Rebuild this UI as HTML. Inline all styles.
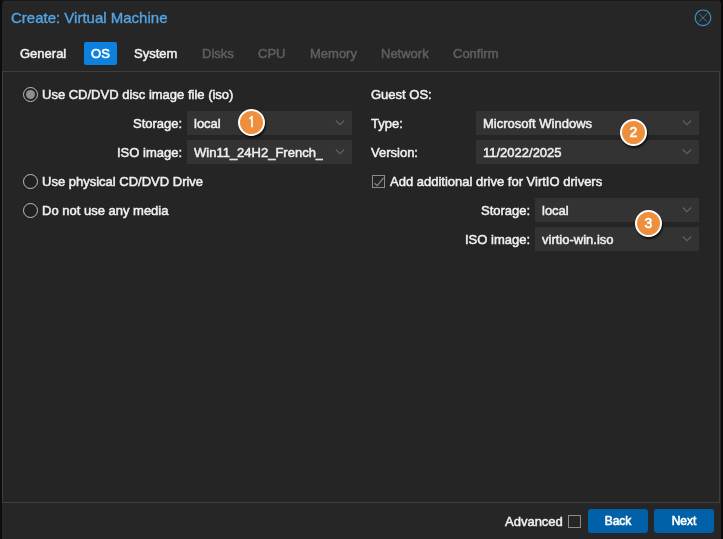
<!DOCTYPE html>
<html><head><meta charset="utf-8">
<style>
html,body{margin:0;padding:0;background:#0d0d0d;}
body{width:723px;height:539px;position:relative;overflow:hidden;font-family:"Liberation Sans",sans-serif;font-size:13px;color:#f0f0f0;-webkit-text-stroke:0.5px;}
.abs{position:absolute;}
.win{position:absolute;left:1.6px;top:1px;width:719.1px;height:538px;background:#262626;border-radius:3px;}
.title{position:absolute;left:11px;top:9px;font-size:15px;-webkit-text-stroke:0.35px;color:#55a3e2;white-space:nowrap;line-height:18px;}
.tab{position:absolute;top:42px;height:22px;line-height:24px;font-size:13px;white-space:nowrap;color:#f0f0f0;}
.tab.dis{color:#5f5f5f;}
.tab.act{background:#0d81df;color:#fff;border-radius:2px;height:23px;-webkit-text-stroke:0.6px;}
.body{position:absolute;left:2px;top:71px;width:718px;height:432px;background:#252525;border:1px solid #3e3e3e;box-sizing:border-box;}
.foot{position:absolute;left:2px;top:503px;width:718.5px;height:36px;background:#262626;}
.lbl{position:absolute;white-space:nowrap;line-height:16px;font-size:13px;color:#f0f0f0;}
.fld{position:absolute;height:24px;background:#333333;}
.fld span{position:absolute;left:7px;top:5px;line-height:16px;white-space:nowrap;}
.fld svg{position:absolute;right:7px;top:9px;}
.radio{position:absolute;width:13px;height:13px;border:1px solid #bebebe;border-radius:50%;background:#212121;}
.cb{position:absolute;width:11px;height:11px;border:1px solid #8c8c8c;}
.btn{position:absolute;top:509px;height:24px;background:#0060a8;border-radius:3px;color:#fff;text-align:center;line-height:24px;font-size:12px;-webkit-text-stroke:0.6px;}
.badge{position:absolute;width:23px;height:23px;border-radius:50%;background:#ee8f3d;border:2px solid #fff;color:#fff;font-family:"NanumGothic","Liberation Sans",sans-serif;font-weight:bold;font-size:13px;text-align:center;line-height:24px;text-indent:0.5px;box-shadow:1px 2px 2px rgba(0,0,0,.7);-webkit-text-stroke:0.3px;}
.badge.lib{font-family:"Liberation Sans",sans-serif;font-size:14px;font-weight:normal;-webkit-text-stroke:0.6px;text-indent:0;line-height:23px;}
.layer{position:absolute;left:0;top:0;width:723px;height:539px;will-change:transform;}
</style></head><body><div class="layer">
<div class="abs" style="left:3px;top:0;width:717px;height:1px;background:#1a1a1a"></div>
<div class="win"></div>
<div class="abs" style="left:4px;top:2px;width:715px;height:1px;background:#2b2b2b"></div>
<div class="abs" style="left:170px;top:12px;width:520px;height:1px;background:#292929"></div>
<div class="title">Create: Virtual Machine</div>
<svg class="abs" style="left:693px;top:8px" width="20" height="20" viewBox="0 0 20 20"><circle cx="10" cy="9.8" r="7.8" fill="none" stroke="#3a94c4" stroke-width="1.2"/><path d="M6 5.8 L14 13.8 M14 5.8 L6 13.8" stroke="#3a86ad" stroke-width="0.9" fill="none"/></svg>
<div class="tab" style="left:20px">General</div>
<div class="tab act" style="left:84px;width:33px;text-align:center">OS</div>
<div class="tab" style="left:134px">System</div>
<div class="tab dis" style="left:202px">Disks</div>
<div class="tab dis" style="left:258px">CPU</div>
<div class="tab dis" style="left:310px">Memory</div>
<div class="tab dis" style="left:381px">Network</div>
<div class="tab dis" style="left:453px">Confirm</div>
<div class="body"></div>
<div class="foot"></div>

<!-- left column -->
<div class="radio" style="left:23px;top:87px"><div class="abs" style="left:2px;top:2px;width:9px;height:9px;border-radius:50%;background:#8e8e8e"></div></div>
<div class="lbl" style="left:42px;top:87px">Use CD/DVD disc image file (iso)</div>
<div class="lbl" style="left:133px;top:116px">Storage:</div>
<div class="fld" style="left:187px;top:111px;width:165px"><span>local</span><svg width="10" height="6" viewBox="0 0 10 6"><path d="M0.8 0.5 L5 4.7 L9.2 0.5" fill="none" stroke="#616161" stroke-width="1.1"/></svg></div>
<div class="lbl" style="left:117px;top:145px">ISO image:</div>
<div class="fld" style="left:187px;top:140px;width:165px"><span style="width:129px;overflow:hidden">Win11_24H2_French_</span><svg width="10" height="6" viewBox="0 0 10 6"><path d="M0.8 0.5 L5 4.7 L9.2 0.5" fill="none" stroke="#616161" stroke-width="1.1"/></svg></div>
<div class="radio" style="left:23px;top:174px"></div>
<div class="lbl" style="left:42px;top:174px">Use physical CD/DVD Drive</div>
<div class="radio" style="left:23px;top:203px"></div>
<div class="lbl" style="left:42px;top:203px">Do not use any media</div>

<!-- right column -->
<div class="lbl" style="left:371px;top:87px">Guest OS:</div>
<div class="lbl" style="left:371px;top:116px">Type:</div>
<div class="fld" style="left:476px;top:111px;width:223px"><span>Microsoft Windows</span><svg width="10" height="6" viewBox="0 0 10 6"><path d="M0.8 0.5 L5 4.7 L9.2 0.5" fill="none" stroke="#616161" stroke-width="1.1"/></svg></div>
<div class="lbl" style="left:371px;top:145px">Version:</div>
<div class="fld" style="left:476px;top:140px;width:223px"><span>11/2022/2025</span><svg width="10" height="6" viewBox="0 0 10 6"><path d="M0.8 0.5 L5 4.7 L9.2 0.5" fill="none" stroke="#616161" stroke-width="1.1"/></svg></div>
<div class="cb" style="left:372px;top:175px"><svg class="abs" style="left:0;top:0" width="11" height="11" viewBox="0 0 11 11"><path d="M1.5 7.3 L4.2 9.7 L10.6 1.8" fill="none" stroke="#8c8c8c" stroke-width="1.2"/></svg></div>
<div class="lbl" style="left:390px;top:174px">Add additional drive for VirtIO drivers</div>
<div class="lbl" style="left:481px;top:203px">Storage:</div>
<div class="fld" style="left:535px;top:198px;width:164px"><span>local</span><svg width="10" height="6" viewBox="0 0 10 6"><path d="M0.8 0.5 L5 4.7 L9.2 0.5" fill="none" stroke="#616161" stroke-width="1.1"/></svg></div>
<div class="lbl" style="left:465px;top:232px">ISO image:</div>
<div class="fld" style="left:535px;top:227px;width:164px"><span>virtio-win.iso</span><svg width="10" height="6" viewBox="0 0 10 6"><path d="M0.8 0.5 L5 4.7 L9.2 0.5" fill="none" stroke="#616161" stroke-width="1.1"/></svg></div>

<div class="badge" style="left:238px;top:109px">1</div>
<div class="badge lib" style="left:620px;top:119px">2</div>
<div class="badge lib" style="left:635px;top:210px">3</div>

<div class="lbl" style="left:505px;top:514px">Advanced</div>
<div class="cb" style="left:568px;top:515px"></div>
<div class="btn" style="left:588px;width:60px">Back</div>
<div class="btn" style="left:654px;width:60px">Next</div>
</div></body></html>
